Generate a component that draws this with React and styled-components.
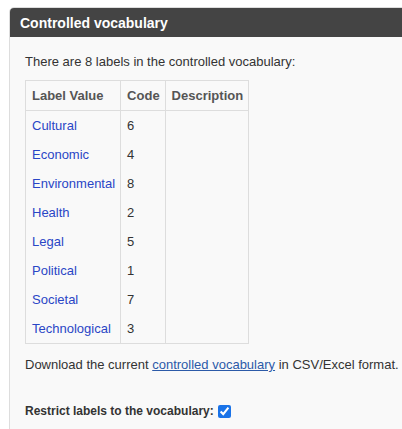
import React from "react";
import styled, { createGlobalStyle } from "styled-components";

const GlobalStyle = createGlobalStyle`
  html, body {
    margin: 0;
    padding: 0;
    background: #ffffff;
    overflow: hidden;
  }
  body {
    font-family: "Liberation Sans", Arial, sans-serif;
    font-size: 13px;
    color: #333333;
  }
`;

const Page = styled.div`
  padding: 7px 0 0 9px;
`;

const Panel = styled.section`
  width: 420px;
  border: 1px solid #dddddd;
  border-radius: 5px 5px 0 0;
  background: #f9f9f9;
  overflow: hidden;
`;

const PanelHeader = styled.h2`
  margin: 0;
  height: 29px;
  display: flex;
  align-items: center;
  padding: 0 10px;
  background: #444444;
  color: #ffffff;
  font-size: 14px;
  font-weight: bold;
`;

const PanelBody = styled.div`
  padding: 16px 15px 12px 15px;
`;

const Text = styled.p`
  margin: 0 0 ${(p) => p.gap || 0}px 0;
  line-height: 18px;
`;

const Table = styled.table`
  border-collapse: collapse;
  border: 1px solid #dddddd;
  margin-bottom: 12px;
`;

const Th = styled.th`
  text-align: left;
  padding: 6px 5px 6px 6px;
  line-height: 17px;
  color: #555555;
  font-weight: bold;
  border: 1px solid #dddddd;
`;

const Td = styled.td`
  padding: 6px 5px 6px 6px;
  line-height: 17px;
  border-left: 1px solid #dddddd;
  border-right: 1px solid #dddddd;
  color: ${(p) => (p.link ? "#2a46c6" : "#333333")};
`;

const DownloadLink = styled.a`
  color: #2c5aa8;
  text-decoration: underline;
`;

const RestrictRow = styled.label`
  display: flex;
  align-items: center;
  gap: 4px;
  margin-top: 30px;
  font-size: 12px;
  font-weight: bold;
  color: #333333;
`;

const Check = styled.input`
  margin: 0;
  width: 13px;
  height: 13px;
  accent-color: #1a73e8;
`;

const labels = [
  ["Cultural", 6],
  ["Economic", 4],
  ["Environmental", 8],
  ["Health", 2],
  ["Legal", 5],
  ["Political", 1],
  ["Societal", 7],
  ["Technological", 3],
];

export default function App() {
  return (
    <>
      <GlobalStyle />
      <Page>
        <Panel>
          <PanelHeader>Controlled vocabulary</PanelHeader>
          <PanelBody>
            <Text gap={9}>There are 8 labels in the controlled vocabulary:</Text>
            <Table>
              <thead>
                <tr>
                  <Th>Label Value</Th>
                  <Th>Code</Th>
                  <Th>Description</Th>
                </tr>
              </thead>
              <tbody>
                {labels.map(([name, code]) => (
                  <tr key={name}>
                    <Td link>{name}</Td>
                    <Td>{code}</Td>
                    <Td></Td>
                  </tr>
                ))}
              </tbody>
            </Table>
            <Text>
              Download the current{" "}
              <DownloadLink href="#">controlled vocabulary</DownloadLink> in
              CSV/Excel format.
            </Text>
            <RestrictRow>
              Restrict labels to the vocabulary:
              <Check type="checkbox" defaultChecked />
            </RestrictRow>
          </PanelBody>
        </Panel>
      </Page>
    </>
  );
}
